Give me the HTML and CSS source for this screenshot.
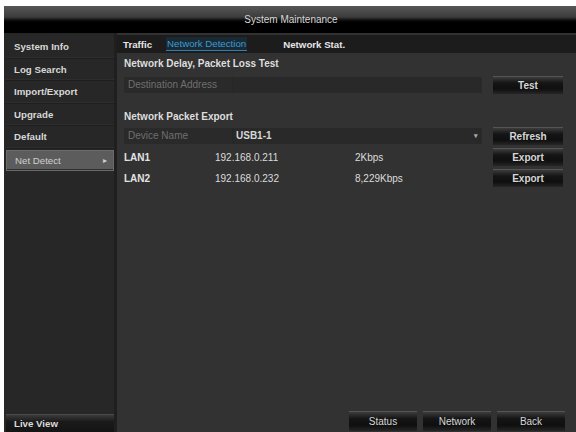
FILE: index.html
```html
<!DOCTYPE html>
<html>
<head>
<meta charset="utf-8">
<link rel="stylesheet" href="styles.css">
</head>
<body>
<div class="app">
  <div class="titlebar">System Maintenance</div>
  <div class="body">
    <div class="sidebar">
      <div class="nav">
        <div class="nav-item">System Info</div>
        <div class="nav-item">Log Search</div>
        <div class="nav-item">Import/Export</div>
        <div class="nav-item">Upgrade</div>
        <div class="nav-item">Default</div>
        <div class="nav-item active"><span>Net Detect</span><span class="caret">&#9656;</span></div>
      </div>
      <div class="live-view">Live View</div>
    </div>
    <div class="main">
      <div class="tabs">
        <span class="tab">Traffic</span>
        <span class="tab current">Network Detection</span>
        <span class="tab">Network Stat.</span>
      </div>
      <div class="content">
        <div class="heading">Network Delay, Packet Loss Test</div>
        <div class="row">
          <div class="field">
            <span class="field-label">Destination Address</span>
            <span class="field-value"></span>
          </div>
          <button class="btn">Test</button>
        </div>
        <div class="heading second">Network Packet Export</div>
        <div class="row">
          <div class="field">
            <span class="field-label">Device Name</span>
            <span class="field-value select"><span>USB1-1</span><span class="arrow">&#9662;</span></span>
          </div>
          <button class="btn">Refresh</button>
        </div>
        <div class="row">
          <div class="lan"><span class="c1">LAN1</span><span class="c2">192.168.0.211</span><span class="c3">2Kbps</span></div>
          <button class="btn">Export</button>
        </div>
        <div class="row">
          <div class="lan"><span class="c1">LAN2</span><span class="c2">192.168.0.232</span><span class="c3">8,229Kbps</span></div>
          <button class="btn">Export</button>
        </div>
      </div>
      <div class="footer">
        <button class="btn wide">Status</button>
        <button class="btn wide">Network</button>
        <button class="btn wide">Back</button>
      </div>
    </div>
  </div>
</div>
</body>
</html>
```

FILE: styles.css
```css
html, body {
  margin: 0;
  padding: 0;
  background: #ffffff;
}
body {
  font-family: "Liberation Sans", Arial, sans-serif;
  font-size: 10px;
  color: #e6e6e6;
}
.app {
  margin: 6px 0 0 4px;
  width: 572px;
  height: 426px;
  display: flex;
  flex-direction: column;
  background: #323232;
  overflow: hidden;
}
.titlebar {
  height: 27px;
  flex: none;
  background: linear-gradient(#575757 0, #3c3c3c 11px, #111 14px, #000 16px, #000 100%);
  text-align: center;
  line-height: 28px;
  font-size: 10px;
  color: #d8d8d8;
  padding-left: 2px;
}
.body {
  flex: 1;
  display: flex;
  min-height: 0;
}
.sidebar {
  width: 110px;
  flex: none;
  background: #272727;
  border-right: 3px solid #1f1f1f;
  display: flex;
  flex-direction: column;
  justify-content: space-between;
}
.nav {
  padding-top: 3px;
}
.nav-item {
  height: 21.5px;
  line-height: 22px;
  padding-left: 8px;
  font-weight: bold;
  font-size: 9.7px;
  color: #d8d8d8;
  border-bottom: 1px solid #1e1e1e;
  box-shadow: inset 0 -1px 0 #2e2e2e;
  margin-left: 2px;
}
.nav-item.active {
  background: #5c5c5c;
  color: #cfcfcf;
  display: flex;
  justify-content: space-between;
  padding-right: 6px;
  height: 19px;
  line-height: 19px;
  border: 1px solid #6a6a6a;
  margin-top: 1px;
  font-weight: normal;
}
.caret {
  font-size: 8px;
}
.live-view {
  height: 17px;
  line-height: 17px;
  margin-left: 2px;
  padding-left: 8px;
  font-weight: bold;
  font-size: 9.7px;
  color: #dcdcdc;
  background: linear-gradient(#3a3a3a, #1a1a1a 40%, #141414);
  border-top: 1px solid #4a4a4a;
}
.main {
  flex: 1;
  display: flex;
  flex-direction: column;
  padding-top: 2px;
}
.tabs {
  height: 18px;
  background: #1c1c1c;
  display: flex;
  align-items: center;
  padding-left: 6px;
}
.tab {
  font-weight: bold;
  color: #e6e6e6;
  margin-right: 14px;
  font-size: 9.7px;
}
.tab.current {
  color: #3a9ad4;
  font-weight: normal;
  border-bottom: 1px solid #2f7fb0;
  margin-right: 36px;
  line-height: 12px;
  padding: 1px 1px 0;
  background: #1a2a35;
}
.content {
  flex: 1;
  padding: 3px 13px 0 7px;
}
.heading {
  height: 16px;
  line-height: 16px;
  font-weight: bold;
  color: #dedede;
  margin-bottom: 4px;
}
.heading.second {
  margin-top: 15px;
  margin-bottom: 2px;
}
.row {
  display: flex;
  align-items: center;
  height: 18px;
  margin-bottom: 3px;
}
.field {
  width: 358px;
  height: 16px;
  display: flex;
  background: #2a2a2a;
}
.field-label {
  width: 104px;
  padding-left: 4px;
  line-height: 16px;
  color: #6f6f6f;
  border-right: 1px solid #262626;
}
.field-value {
  flex: 1;
  background: #292929;
}
.field-value.select {
  display: flex;
  justify-content: space-between;
  padding-left: 3px;
  padding-right: 4px;
  line-height: 16px;
  font-weight: bold;
  color: #d8d8d8;
}
.arrow {
  font-size: 7px;
  color: #aaa;
}
.lan {
  width: 358px;
  display: flex;
  font-weight: bold;
  color: #e2e2e2;
}
.c1 { width: 91px; }
.c2 { width: 140px; font-weight: normal; color: #dcdcdc; }
.c3 { font-weight: normal; color: #dcdcdc; }
.btn {
  margin-left: 11px;
  width: 70px;
  height: 18px;
  padding: 0;
  font-family: "Liberation Sans", Arial, sans-serif;
  font-size: 10px;
  font-weight: bold;
  color: #d6d6d6;
  border: none;
  border-top: 1px solid #555;
  background: linear-gradient(#3c3c3c, #151515 35%, #0f0f0f 70%, #262626);
}
.footer {
  display: flex;
  justify-content: flex-end;
  gap: 6px;
  padding-right: 11px;
  height: 21px;
  align-items: flex-start;
}
.btn.wide {
  margin-left: 0;
  width: 68px;
  height: 20px;
  font-weight: normal;
}
```
